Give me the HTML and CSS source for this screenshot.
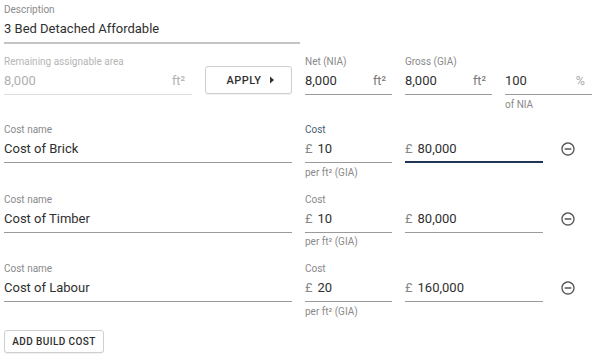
FILE: index.html
```html
<!DOCTYPE html>
<html>
<head>
<meta charset="utf-8">
<link rel="stylesheet" href="styles.css">
</head>
<body>
<div class="page">
  <div class="field desc">
    <div class="label">Description</div>
    <div class="input thick"><span class="val">3 Bed Detached Affordable</span></div>
  </div>

  <div class="area-row">
    <div class="field disabled">
      <div class="label">Remaining assignable area</div>
      <div class="input"><span class="val">8,000</span><span class="unit">ft²</span></div>
    </div>
    <button class="btn apply">APPLY <svg width="6" height="8" viewBox="0 0 6 8"><path d="M1 0.5 L5 4 L1 7.5 Z" fill="#333"/></svg></button>
    <div class="field">
      <div class="label">Net (NIA)</div>
      <div class="input"><span class="val">8,000</span><span class="unit">ft²</span></div>
    </div>
    <div class="field">
      <div class="label">Gross (GIA)</div>
      <div class="input"><span class="val">8,000</span><span class="unit">ft²</span></div>
    </div>
    <div class="field">
      <div class="label">&nbsp;</div>
      <div class="input"><span class="val">100</span><span class="unit pct">%</span></div>
      <div class="helper">of NIA</div>
    </div>
  </div>

  <div class="costs">
    <div class="cost-row">
      <div class="field">
        <div class="label">Cost name</div>
        <div class="input"><span class="val">Cost of Brick</span></div>
      </div>
      <div class="field">
        <div class="label focus-label">Cost</div>
        <div class="input"><span class="cur">£</span><span class="val">10</span></div>
        <div class="helper">per ft² (GIA)</div>
      </div>
      <div class="field">
        <div class="label">&nbsp;</div>
        <div class="input focused"><span class="cur">£</span><span class="val">80,000</span></div>
      </div>
      <div class="icon-cell">
        <svg width="16" height="16" viewBox="0 0 24 24"><path fill="#555" d="M7 11v2h10v-2H7zm5-9C6.48 2 2 6.48 2 12s4.48 10 10 10 10-4.48 10-10S17.52 2 12 2zm0 18c-4.41 0-8-3.59-8-8s3.59-8 8-8 8 3.59 8 8-3.59 8-8 8z"/></svg>
      </div>
    </div>

    <div class="cost-row">
      <div class="field">
        <div class="label">Cost name</div>
        <div class="input"><span class="val">Cost of Timber</span></div>
      </div>
      <div class="field">
        <div class="label">Cost</div>
        <div class="input"><span class="cur">£</span><span class="val">10</span></div>
        <div class="helper">per ft² (GIA)</div>
      </div>
      <div class="field">
        <div class="label">&nbsp;</div>
        <div class="input"><span class="cur">£</span><span class="val">80,000</span></div>
      </div>
      <div class="icon-cell">
        <svg width="16" height="16" viewBox="0 0 24 24"><path fill="#555" d="M7 11v2h10v-2H7zm5-9C6.48 2 2 6.48 2 12s4.48 10 10 10 10-4.48 10-10S17.52 2 12 2zm0 18c-4.41 0-8-3.59-8-8s3.59-8 8-8 8 3.59 8 8-3.59 8-8 8z"/></svg>
      </div>
    </div>

    <div class="cost-row">
      <div class="field">
        <div class="label">Cost name</div>
        <div class="input"><span class="val">Cost of Labour</span></div>
      </div>
      <div class="field">
        <div class="label">Cost</div>
        <div class="input"><span class="cur">£</span><span class="val">20</span></div>
        <div class="helper">per ft² (GIA)</div>
      </div>
      <div class="field">
        <div class="label">&nbsp;</div>
        <div class="input"><span class="cur">£</span><span class="val">160,000</span></div>
      </div>
      <div class="icon-cell">
        <svg width="16" height="16" viewBox="0 0 24 24"><path fill="#555" d="M7 11v2h10v-2H7zm5-9C6.48 2 2 6.48 2 12s4.48 10 10 10 10-4.48 10-10S17.52 2 12 2zm0 18c-4.41 0-8-3.59-8-8s3.59-8 8-8 8 3.59 8 8-3.59 8-8 8z"/></svg>
      </div>
    </div>
  </div>

  <button class="btn add">ADD BUILD COST</button>
</div>
</body>
</html>
```

FILE: styles.css
```css
* { box-sizing: border-box; }
html, body { margin: 0; padding: 0; background: #fff; }
body {
  font-family: Roboto, "Liberation Sans", sans-serif;
  color: #333;
  width: 600px;
  height: 363px;
  overflow: hidden;
}
.page {
  padding: 4px 0 0 4px;
  display: flex;
  flex-direction: column;
  align-items: flex-start;
}
.field { display: flex; flex-direction: column; min-width: 0; }
.label {
  font-size: 10px;
  line-height: 12px;
  color: #8a8a8a;
  white-space: nowrap;
}
.focus-label { color: #4a6070; }
.input {
  margin-top: 4px;
  display: flex;
  align-items: baseline;
  font-size: 13px;
  line-height: 18px;
  padding-bottom: 4px;
  border-bottom: 1px solid #9a9a9a;
  white-space: nowrap;
}
.input .val { flex: 1; color: #2f2f2f; }
.input .unit { color: #777; padding-right: 6px; font-size: 12.5px; }
.input .unit.pct { color: #aaa; padding-right: 7px; }
.input .cur { color: #888; margin-right: 5px; }
.input.thick { border-bottom: 2px solid #c4c4c4; }
.input.focused { border-bottom: 2px solid #1e3556; padding-bottom: 3px; }
.helper {
  margin-top: 3.5px;
  font-size: 10px;
  line-height: 12px;
  color: #8a8a8a;
  white-space: nowrap;
}
.desc { width: 296px; }
.disabled .label { color: #b5b5b5; }
.disabled .input { border-bottom-color: #dcdcdc; }
.disabled .input .val { color: #b0b0b0; }
.disabled .input .unit { color: #b0b0b0; padding-right: 7px; }

.area-row {
  margin-top: 12px;
  display: grid;
  grid-template-columns: 188px 87px 87px 87px 87px;
  column-gap: 13px;
  align-items: start;
}
.btn {
  font-family: Roboto, "Liberation Sans", sans-serif;
  background: #fff;
  border: 1px solid #cfcfcf;
  border-radius: 3px;
  color: #2f2f2f;
  font-weight: 500;
  cursor: pointer;
  box-shadow: 0 1px 1px rgba(0,0,0,0.06);
}
.apply {
  margin-top: 10px;
  height: 28px;
  font-size: 11px;
  letter-spacing: 0.5px;
  display: flex;
  align-items: center;
  justify-content: center;
  gap: 7px;
  padding: 0 0 0 4px;
}
.costs {
  margin-top: 13.5px;
  display: flex;
  flex-direction: column;
  gap: 15px;
}
.cost-row {
  display: grid;
  grid-template-columns: 288px 87px 138px 50px;
  column-gap: 13px;
  align-items: start;
}
.icon-cell {
  display: flex;
  justify-content: flex-start;
  padding-top: 17px;
  padding-left: 4px;
}
.add {
  margin-top: 12.5px;
  height: 23px;
  width: 100px;
  font-size: 10px;
  letter-spacing: 0.4px;
  padding: 0;
}
```
